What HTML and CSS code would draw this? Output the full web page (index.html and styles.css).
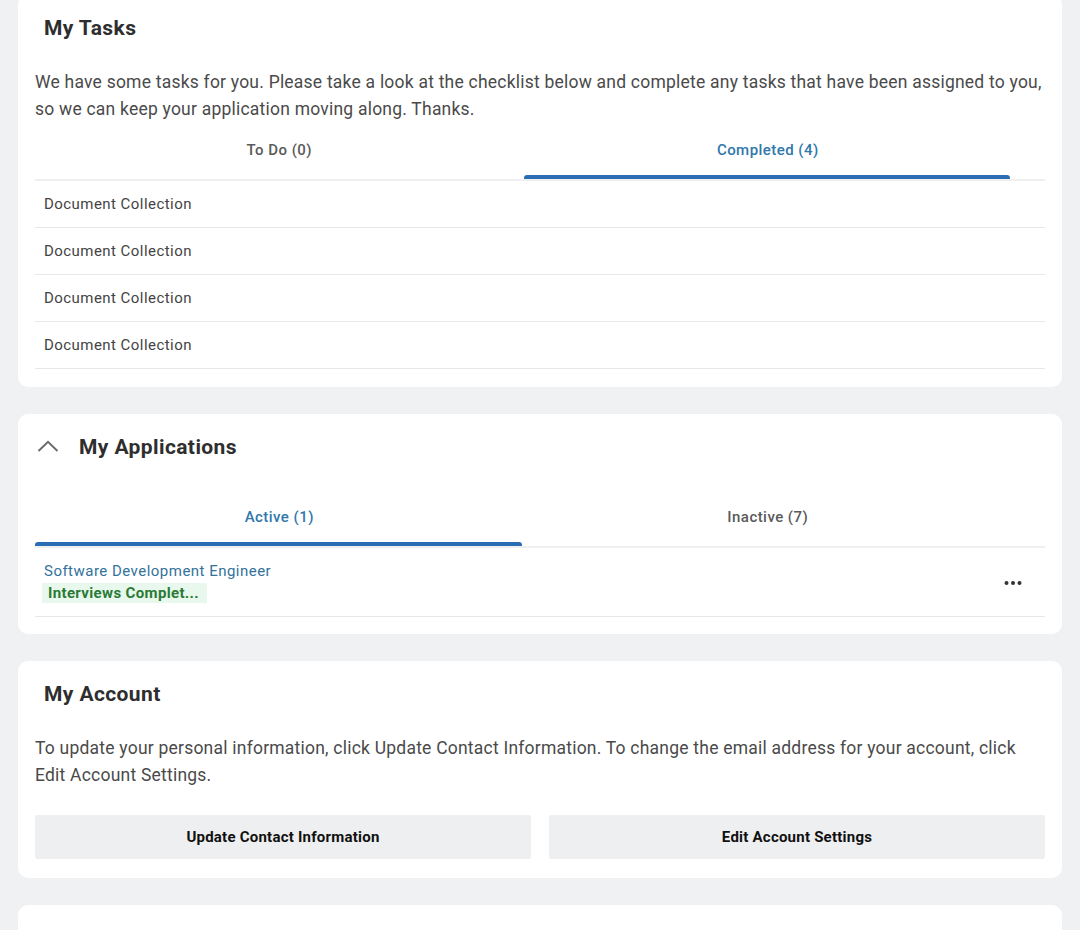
FILE: index.html
```html
<!DOCTYPE html>
<html lang="en">
<head>
<meta charset="utf-8">
<title>Candidate Home</title>
<link rel="stylesheet" href="styles.css">
</head>
<body>
<main class="page">
  <section class="card">
    <h2 class="card-title">My Tasks</h2>
    <p class="card-text">We have some tasks for you. Please take a look at the checklist below and complete any tasks that have been assigned to you, so we can keep your application moving along. Thanks.</p>
    <div class="tabs">
      <div class="tab-list">
        <button class="tab">To Do (0)</button>
        <button class="tab active">Completed (4)</button>
      </div>
    </div>
    <ul class="task-list">
      <li class="task">Document Collection</li>
      <li class="task">Document Collection</li>
      <li class="task">Document Collection</li>
      <li class="task">Document Collection</li>
    </ul>
  </section>

  <section class="card card-apps">
    <div class="card-head">
      <svg class="chevron" width="22" height="12" viewBox="0 0 22 12" aria-hidden="true">
        <path d="M1.5 11 L11 1.8 L20.5 11" fill="none" stroke="#6b6b6b" stroke-width="2"/>
      </svg>
      <h2 class="card-title inline">My Applications</h2>
    </div>
    <div class="tabs apps-tabs">
      <div class="tab-list">
        <button class="tab active">Active (1)</button>
        <button class="tab">Inactive (7)</button>
      </div>
    </div>
    <div class="app-row">
      <div class="app-info">
        <a class="app-link" href="#">Software Development Engineer</a>
        <span class="badge">Interviews Complet...</span>
      </div>
      <svg class="more" width="18" height="6" viewBox="0 0 18 6" aria-hidden="true">
        <circle cx="2.5" cy="3" r="2" fill="#333"/>
        <circle cx="9" cy="3" r="2" fill="#333"/>
        <circle cx="15.5" cy="3" r="2" fill="#333"/>
      </svg>
    </div>
  </section>

  <section class="card">
    <h2 class="card-title">My Account</h2>
    <p class="card-text">To update your personal information, click Update Contact Information. To change the email address for your account, click Edit Account Settings.</p>
    <div class="actions">
      <button class="btn">Update Contact Information</button>
      <button class="btn">Edit Account Settings</button>
    </div>
  </section>

  <section class="card card-tail"></section>
</main>
</body>
</html>
```

FILE: styles.css
```css
* { box-sizing: border-box; }

html, body {
  margin: 0;
  padding: 0;
  background: #f0f1f3;
  font-family: Roboto, "Liberation Sans", Arial, sans-serif;
  color: #333;
}

.page {
  display: flex;
  flex-direction: column;
  gap: 27px;
  padding: 0 18px;
  margin-top: -5px;
}

.card {
  background: #fff;
  border-radius: 10px;
  padding: 19px 17px 18px;
}

.card-apps { padding-bottom: 17px; }

.card-title {
  margin: 0;
  padding-left: 9px;
  font-size: 21px;
  line-height: 28px;
  font-weight: 700;
  letter-spacing: 0.4px;
  color: #2e2e2e;
}

.card-title.inline { padding-left: 0; }

.card-text {
  margin: 27px -4px 0 0;
  font-size: 17.5px;
  line-height: 27px;
  letter-spacing: 0.22px;
  color: #4a4a4a;
}

.tabs {
  border-bottom: 2px solid #efefef;
  margin-top: -1px;
}

.apps-tabs { margin-top: 28px; }

.tab-list {
  display: grid;
  grid-template-columns: 1fr 1fr;
  margin-right: 33px;
}

.tab {
  position: relative;
  height: 57px;
  padding: 0 0 2px;
  border: 0;
  background: transparent;
  font-family: inherit;
  font-size: 15px;
  font-weight: 500;
  letter-spacing: 0.45px;
  color: #5a5a5a;
  cursor: pointer;
}

.tab.active { color: #2f78ab; }

.tab.active::after {
  content: "";
  position: absolute;
  left: 0;
  right: 2px;
  bottom: 0;
  height: 4px;
  border-radius: 3px 3px 0 0;
  background: #2a6db4;
}

.task-list {
  list-style: none;
  margin: 0;
  padding: 0;
}

.task {
  height: 47px;
  display: flex;
  align-items: center;
  padding: 0 9px 1px;
  border-bottom: 1px solid #e8e8e8;
  font-size: 15px;
  letter-spacing: 0.45px;
  color: #444;
}

.card-head {
  display: flex;
  align-items: center;
  gap: 20px;
  padding-left: 2px;
}

.chevron { flex: none; margin-top: -3px; }

.app-row {
  display: flex;
  align-items: center;
  justify-content: space-between;
  padding: 13px 23px 13px 9px;
  border-bottom: 1px solid #e8e8e8;
}

.app-info {
  display: flex;
  flex-direction: column;
  align-items: flex-start;
  gap: 2px;
}

.app-link {
  font-size: 15px;
  line-height: 20px;
  letter-spacing: 0.48px;
  color: #33729b;
  text-decoration: none;
}

.badge {
  display: inline-block;
  margin-left: -2px;
  padding: 0 8px 0 6px;
  height: 20px;
  line-height: 20px;
  background: #e9f8ec;
  color: #2a7a36;
  font-size: 15px;
  font-weight: 700;
  letter-spacing: 0.35px;
}

.more { flex: none; margin-top: 2px; }

.actions {
  display: grid;
  grid-template-columns: 1fr 1fr;
  gap: 18px;
  margin-top: 26px;
  padding-bottom: 1px;
}

.btn {
  height: 44px;
  border: 0;
  border-radius: 2px;
  background: #eeeff0;
  font-family: inherit;
  font-size: 15px;
  font-weight: 700;
  letter-spacing: 0.23px;
  color: #111;
  cursor: pointer;
}

.card-tail { height: 60px; }
```
